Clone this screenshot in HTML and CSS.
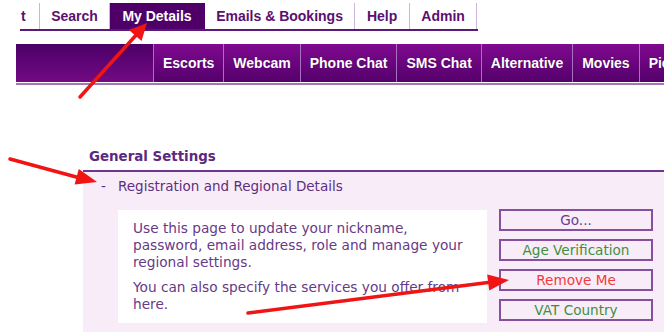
FILE: index.html
```html
<!DOCTYPE html>
<html>
<head>
<meta charset="utf-8">
<title>My Details</title>
<link rel="stylesheet" href="styles.css">
</head>
<body>
<div class="page">
  <ul class="tabs">
    <li class="tab tab-first">t</li>
    <li class="tab">Search</li>
    <li class="tab tab-active">My Details</li>
    <li class="tab">Emails &amp; Bookings</li>
    <li class="tab">Help</li>
    <li class="tab">Admin</li>
  </ul>

  <nav class="catbar">
    <span class="cat-lead"></span>
    <span class="cat">Escorts</span>
    <span class="cat">Webcam</span>
    <span class="cat">Phone Chat</span>
    <span class="cat">SMS Chat</span>
    <span class="cat">Alternative</span>
    <span class="cat">Movies</span>
    <span class="cat">Pictures</span>
  </nav>

  <section class="settings">
    <h2 class="settings-title">General Settings</h2>
    <div class="panel">
      <div class="panel-head"><span class="dash">-</span>Registration and Regional Details</div>
      <div class="panel-body">
        <div class="info">
          <p>Use this page to update your nickname, password, email address, role and manage your regional settings.</p>
          <p>You can also specify the services you offer from here.</p>
        </div>
        <div class="actions">
          <button class="btn btn-go">Go...</button>
          <button class="btn btn-green">Age Verification</button>
          <button class="btn btn-red">Remove Me</button>
          <button class="btn btn-green">VAT Country</button>
        </div>
      </div>
    </div>
  </section>
</div>

<svg class="annotations" width="664" height="332" viewBox="0 0 664 332">
  <g stroke="#f01414" stroke-width="3.5" stroke-linecap="round" fill="none">
    <line x1="80" y1="97" x2="138" y2="33"/>
    <line x1="10" y1="159" x2="80" y2="178"/>
    <line x1="248" y1="313" x2="492" y2="282"/>
  </g>
  <g fill="#f01414">
    <polygon points="147,23 141.5,41 129,30"/>
    <polygon points="97,182 74.6,184.5 78.8,169.1"/>
    <polygon points="509,280 489.2,290.4 487.2,274.6"/>
  </g>
</svg>
</body>
</html>
```

FILE: styles.css
```css
html, body {
  margin: 0;
  padding: 0;
  background: #ffffff;
}

body {
  width: 664px;
  height: 332px;
  overflow: hidden;
  position: relative;
  font-family: "DejaVu Sans", Verdana, sans-serif;
}

.page {
  display: flex;
  flex-direction: column;
}

/* top tabs */
.tabs {
  list-style: none;
  margin: 3px 0 0 20px;
  padding: 0;
  width: 458px;
  display: flex;
  border-bottom: 2px solid #5a1878;
}

.tab {
  font-family: "Liberation Sans", Arial, sans-serif;
  font-weight: bold;
  font-size: 14px;
  line-height: 26px;
  color: #5a1070;
  padding: 0 11.5px;
  border-right: 1px solid #cdb4da;
  white-space: nowrap;
}

.tab-first {
  padding: 0 13px 0 1px;
}

.tab-active {
  background: #4e0068;
  color: #ffffff;
  border-right-color: #4e0068;
  padding: 0 12px;
}

/* category bar */
.catbar {
  margin: 13px 0 0 16px;
  display: flex;
  height: 38px;
  white-space: nowrap;
  box-shadow: 0 1px 0 #ffffff, 0 3px 0 #9f78b4;
}

.cat-lead {
  flex: 0 0 137px;
  background: linear-gradient(#4b0066, #730a84);
}

.cat {
  font-family: "Liberation Sans", Arial, sans-serif;
  font-weight: bold;
  font-size: 14px;
  line-height: 38px;
  color: #ffffff;
  padding: 0 9px;
  border-left: 1px solid #a870c0;
  background: linear-gradient(#800a90, #54006b);
  text-shadow: 0 0 1px #3a0048;
}

/* settings */
.settings {
  margin: 66px 0 0 83px;
}

.settings-title {
  margin: 0;
  padding: 0 0 5px 6px;
  font-size: 13.4px;
  line-height: 17px;
  font-weight: bold;
  color: #5b2a80;
  border-bottom: 2px solid #6b3590;
}

.panel {
  background: #f8ecf8;
  height: 200px;
}

.panel-head {
  padding: 6px 0 0 18px;
  font-size: 13.5px;
  line-height: 17px;
  color: #5e2f80;
}

.dash {
  display: inline-block;
  width: 17px;
}

.panel-body {
  display: flex;
  align-items: flex-start;
  gap: 12px;
  padding: 14px 0 0 35px;
}

.info {
  width: 339px;
  margin-top: 1px;
  padding: 10px 15px 10px 15px;
  background: #ffffff;
  font-size: 13.7px;
  line-height: 17px;
  color: #673a87;
}

.info p {
  margin: 0 0 8px 0;
}

.info p:last-child {
  margin-bottom: 0;
}

.actions {
  display: flex;
  flex-direction: column;
  gap: 8px;
}

.btn {
  width: 154px;
  height: 22px;
  padding: 0;
  border: 2px solid #87509f;
  background: #f8ecf8;
  font-family: "DejaVu Sans", Verdana, sans-serif;
  font-size: 13.6px;
  line-height: 18px;
  text-align: center;
}

.btn-go { color: #6a3a8a; }
.btn-green { color: #3f8f3f; }
.btn-red { color: #f03a3a; }

.annotations {
  position: absolute;
  top: 0;
  left: 0;
  pointer-events: none;
}
```
